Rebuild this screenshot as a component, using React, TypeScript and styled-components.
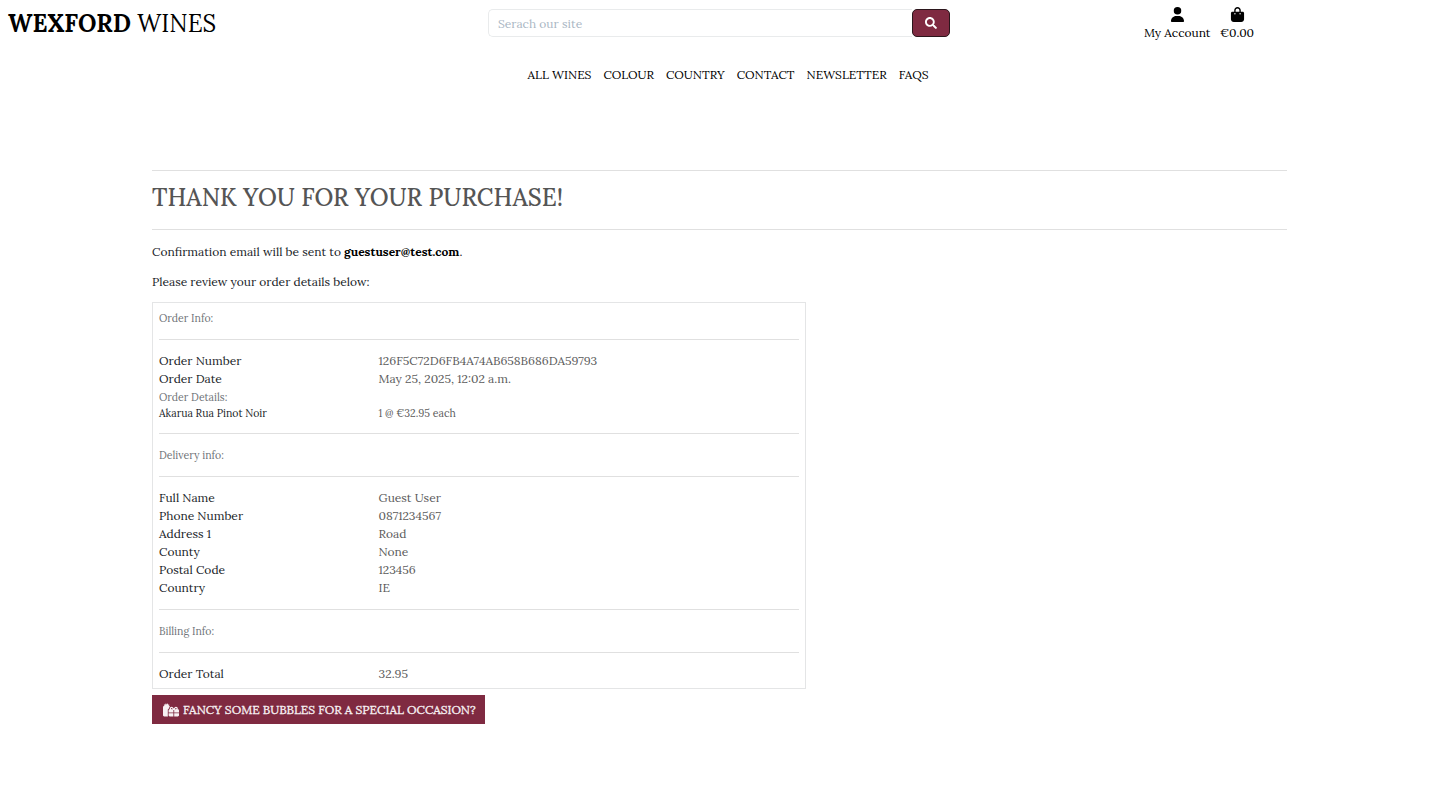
import React from 'react';
import styled, { createGlobalStyle } from 'styled-components';
import { FaSearch } from 'react-icons/fa';
import { FaBagShopping, FaGifts, FaUser } from 'react-icons/fa6';

const GlobalStyle = createGlobalStyle`
  * { box-sizing: border-box; }
  body {
    margin: 0;
    background: #fff;
    color: #000;
    font-family: Lora, "Liberation Serif", serif;
    font-size: 12px;
    line-height: 18px;
  }
`;

const Header = styled.header`
  display: grid;
  grid-template-columns: 488px 462px 1fr;
  height: 60px;
`;

const Brand = styled.a`
  padding: 9px 0 0 8px;
  font-size: 24px;
  line-height: 29px;
  letter-spacing: 0.04px;
`;

const SearchForm = styled.form`
  display: flex;
  height: 28.5px;
  margin-top: 8.8px;
`;

const SearchInput = styled.input`
  flex: 1;
  min-width: 0;
  padding: 0 9px;
  border: 1px solid #e9ebec;
  border-right: 0;
  border-radius: 5px 0 0 5px;
  font: 12px Lora, "Liberation Serif", serif;
  outline: none;
  &::placeholder { color: #aab7c4; opacity: 1; }
`;

const SearchButton = styled.button`
  display: flex;
  align-items: center;
  justify-content: center;
  width: 38px;
  padding: 0;
  border: 1px solid #2b161c;
  border-radius: 5px;
  background: #7f2a41;
  color: #fff;
`;

const AccountLinks = styled.nav`
  display: flex;
  align-items: flex-start;
  gap: 9.5px;
  padding: 7px 0 0 194px;
`;

const AccountLink = styled.a`
  display: flex;
  flex-direction: column;
  align-items: center;
  gap: 2px;
`;

const MainNav = styled.nav`
  display: flex;
  gap: 12px;
  padding: 6px 0 0 527.5px;
`;

const Page = styled.main`
  width: 1134.5px;
  margin: 86px 0 0 152px;
  color: #212529;
`;

const Rule = styled.hr<{ $gap?: number }>`
  height: 1px;
  margin: ${({ $gap = 12 }) => $gap}px 0;
  border: 0;
  background: #e0e0e0;
`;

const Title = styled.h2`
  margin: 12px 0 16px;
  color: #555;
  font-size: 24px;
  font-weight: 500;
  line-height: 30px;
`;

const Paragraph = styled.p`
  margin: 12px 0;
`;

const Intro = styled.div`
  padding-top: 1px;
`;

const Email = styled.strong`
  color: #000;
`;

const OrderCard = styled.section`
  width: 654px;
  height: 387px;
  margin-top: -1px;
  padding: 6px 6px 0;
  border: 1px solid #e4e5e6;
`;

const SectionLabel = styled.div`
  color: #6f7478;
  font-size: 10.5px;
`;

const Row = styled.div<{ $small?: boolean }>`
  display: grid;
  grid-template-columns: 219.5px 1fr;
  font-size: ${({ $small }) => ($small ? 10.5 : 12)}px;
  line-height: ${({ $small }) => ($small ? 15 : 18)}px;
`;

const Value = styled.span`
  color: #5c5c5c;
`;

const BubblesButton = styled.a`
  display: flex;
  align-items: center;
  gap: 4px;
  width: 333px;
  height: 28.5px;
  margin-top: 6px;
  padding: 1px 0 0 11px;
  background: #7f2a41;
  color: #f7f1f3;
  white-space: nowrap;
  -webkit-text-stroke: 0.3px #f7f1f3;
`;

type Entry = [label: string, value: string];

const orderEntries: Entry[] = [
  ['Order Number', '126F5C72D6FB4A74AB658B686DA59793'],
  ['Order Date', 'May 25, 2025, 12:02 a.m.'],
];

const deliveryEntries: Entry[] = [
  ['Full Name', 'Guest User'],
  ['Phone Number', '0871234567'],
  ['Address 1', 'Road'],
  ['County', 'None'],
  ['Postal Code', '123456'],
  ['Country', 'IE'],
];

const navEntries = ['ALL WINES', 'COLOUR', 'COUNTRY', 'CONTACT', 'NEWSLETTER', 'FAQS'];

function Entries({ entries, small }: { entries: Entry[]; small?: boolean }) {
  return (
    <>
      {entries.map(([label, value]) => (
        <Row key={label} $small={small}>
          <span>{label}</span>
          <Value>{value}</Value>
        </Row>
      ))}
    </>
  );
}

export default function App() {
  return (
    <>
      <GlobalStyle />
      <Header>
        <Brand>
          <strong>WEXFORD</strong> WINES
        </Brand>
        <SearchForm>
          <SearchInput placeholder="Serach our site" />
          <SearchButton type="button" aria-label="Search">
            <FaSearch size={12} />
          </SearchButton>
        </SearchForm>
        <AccountLinks>
          <AccountLink>
            <FaUser size={15} />
            <span>My Account</span>
          </AccountLink>
          <AccountLink>
            <FaBagShopping size={15} />
            <span>€0.00</span>
          </AccountLink>
        </AccountLinks>
      </Header>
      <MainNav>
        {navEntries.map((label) => (
          <span key={label}>{label}</span>
        ))}
      </MainNav>
      <Page>
        <Rule $gap={0} />
        <Title>THANK YOU FOR YOUR PURCHASE!</Title>
        <Rule $gap={0} />
        <Intro>
          <Paragraph>
            Confirmation email will be sent to <Email>guestuser@test.com</Email>.
          </Paragraph>
          <Paragraph>Please review your order details below:</Paragraph>
        </Intro>
        <OrderCard>
          <SectionLabel>Order Info:</SectionLabel>
          <Rule />
          <Entries entries={orderEntries} />
          <SectionLabel>Order Details:</SectionLabel>
          <Entries small entries={[['Akarua Rua Pinot Noir', '1 @ €32.95 each']]} />
          <Rule />
          <SectionLabel>Delivery info:</SectionLabel>
          <Rule />
          <Entries entries={deliveryEntries} />
          <Rule />
          <SectionLabel>Billing Info:</SectionLabel>
          <Rule />
          <Entries entries={[['Order Total', '32.95']]} />
        </OrderCard>
        <BubblesButton>
          <FaGifts size={16} />
          <span>FANCY SOME BUBBLES FOR A SPECIAL OCCASION?</span>
        </BubblesButton>
      </Page>
    </>
  );
}
